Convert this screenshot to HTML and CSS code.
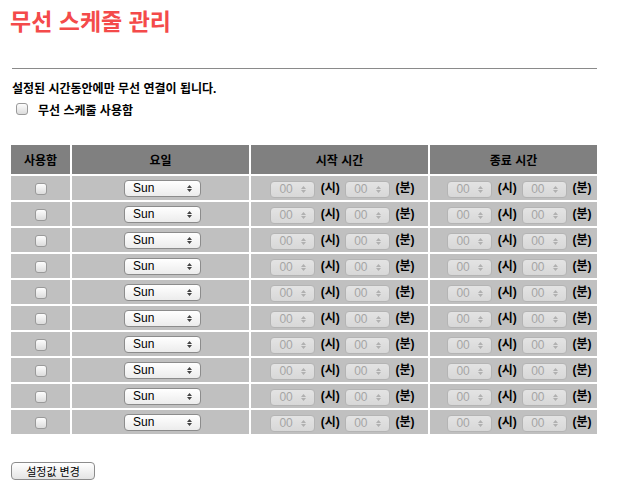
FILE: index.html
```html
<!DOCTYPE html>
<html lang="ko">
<head>
  <meta charset="UTF-8" />
  <title>무선 스케줄 관리</title>
  <link rel="stylesheet" href="styles.css">
</head>
<body>
  <h1 class="title">무선 스케줄 관리</h1>
  <hr class="rule" />
  <p class="desc">설정된 시간동안에만 무선 연결이 됩니다.</p>
  <label class="enable"><input type="checkbox" class="chk" /> 무선 스케줄 사용함</label>

  <table class="sched">
    <thead>
      <tr>
        <th class="c-use">사용함</th>
        <th class="c-day">요일</th>
        <th class="c-time">시작 시간</th>
        <th class="c-end">종료 시간</th>
      </tr>
    </thead>
    <tbody id="rows"></tbody>
  </table>

  <button class="apply">설정값 변경</button>

  <script>
    // 스케줄 행 10개 생성
    const rows = document.getElementById('rows');
    const timePair = () =>
      `<select class="sel tm" disabled><option>00</option></select> <b>(시)</b> ` +
      `<select class="sel tm" disabled><option>00</option></select> <b>(분)</b>`;
    for (let i = 0; i < 10; i++) {
      const tr = document.createElement('tr');
      tr.innerHTML =
        `<td><input type="checkbox" class="chk" /></td>` +
        `<td><select class="sel day"><option>Sun</option><option>Mon</option><option>Tue</option>` +
        `<option>Wed</option><option>Thu</option><option>Fri</option><option>Sat</option></select></td>` +
        `<td class="t-start">${timePair()}</td>` +
        `<td class="t-end">${timePair()}</td>`;
      rows.appendChild(tr);
    }
  </script>
</body>
</html>
```

FILE: styles.css
```css
body {
  margin: 0;
  padding: 4px 10px;
  font-family: 'Liberation Sans', 'Noto Sans CJK KR', sans-serif;
  font-size: 12px;
  color: #000;
  background: #fff;
}
.title {
  margin: 0;
  font-size: 23px;
  line-height: 32px;
  color: #f44a4a;
  font-family: 'Noto Sans CJK KR', sans-serif;
}
.rule {
  border: 0;
  border-top: 1px solid #8a8a8a;
  margin: 32px 0 0 2px;
  width: 585px;
  height: 0;
}
.desc {
  margin: 12px 0 0 2px;
  font-weight: bold;
  line-height: 16px;
}
.enable {
  display: flex;
  align-items: center;
  gap: 10px;
  margin: 4px 0 0 6px;
  height: 16px;
  font-weight: bold;
}
.chk {
  appearance: none;
  width: 12px;
  height: 12px;
  margin: 0;
  border: 1px solid #9a9a9a;
  border-radius: 3px;
  background: linear-gradient(#fdfdfd, #dcdcdc);
  vertical-align: middle;
}
.sched {
  margin: 26px 0 0 -1px;
  border-spacing: 2px;
  width: 590px;
}
.sched th {
  background: #808080;
  height: 29px;
  padding: 0;
  font-size: 12px;
  font-weight: bold;
}
.c-use { width: 59px; }
.c-day { width: 177px; }
.c-time { width: 177px; }
.sched td {
  background: #c0c0c0;
  height: 24px;
  padding: 0;
  text-align: center;
  white-space: nowrap;
}
.sched td.t-start { padding-left: 8px; }
.sched td.t-end { padding-left: 14px; }
.sched td b {
  margin: 0 2px;
}
.sel {
  appearance: none;
  height: 17px;
  border: 1px solid #8c8c8c;
  border-radius: 4px;
  font-family: 'Liberation Sans', sans-serif;
  font-size: 12px;
  padding: 0 0 0 8px;
  vertical-align: middle;
  background: url("data:image/svg+xml,%3Csvg xmlns='http://www.w3.org/2000/svg' width='5' height='9'%3E%3Cpath d='M2.5 1L5 4H0zM2.5 8L0 5h5z' fill='%23444'/%3E%3C/svg%3E") no-repeat right 8px center, linear-gradient(#fff, #ececec);
}
.day {
  width: 77px;
  color: #000;
  margin-left: 4px;
}
.tm {
  width: 45px;
  color: #9a9a9a;
  border-color: #b0b0b0;
  background: url("data:image/svg+xml,%3Csvg xmlns='http://www.w3.org/2000/svg' width='5' height='9'%3E%3Cpath d='M2.5 1L5 4H0zM2.5 8L0 5h5z' fill='%23aaa'/%3E%3C/svg%3E") no-repeat right 8px center, linear-gradient(#f3f3f3, #e2e2e2);
}
.apply {
  display: block;
  margin: 26px 0 0 1px;
  width: 84px;
  height: 18px;
  padding: 0;
  border: 1px solid #8c8c8c;
  border-radius: 4px;
  background: linear-gradient(#fff, #e4e4e4);
  font-family: 'Noto Sans CJK KR', sans-serif;
  font-size: 11px;
  color: #000;
}
```
